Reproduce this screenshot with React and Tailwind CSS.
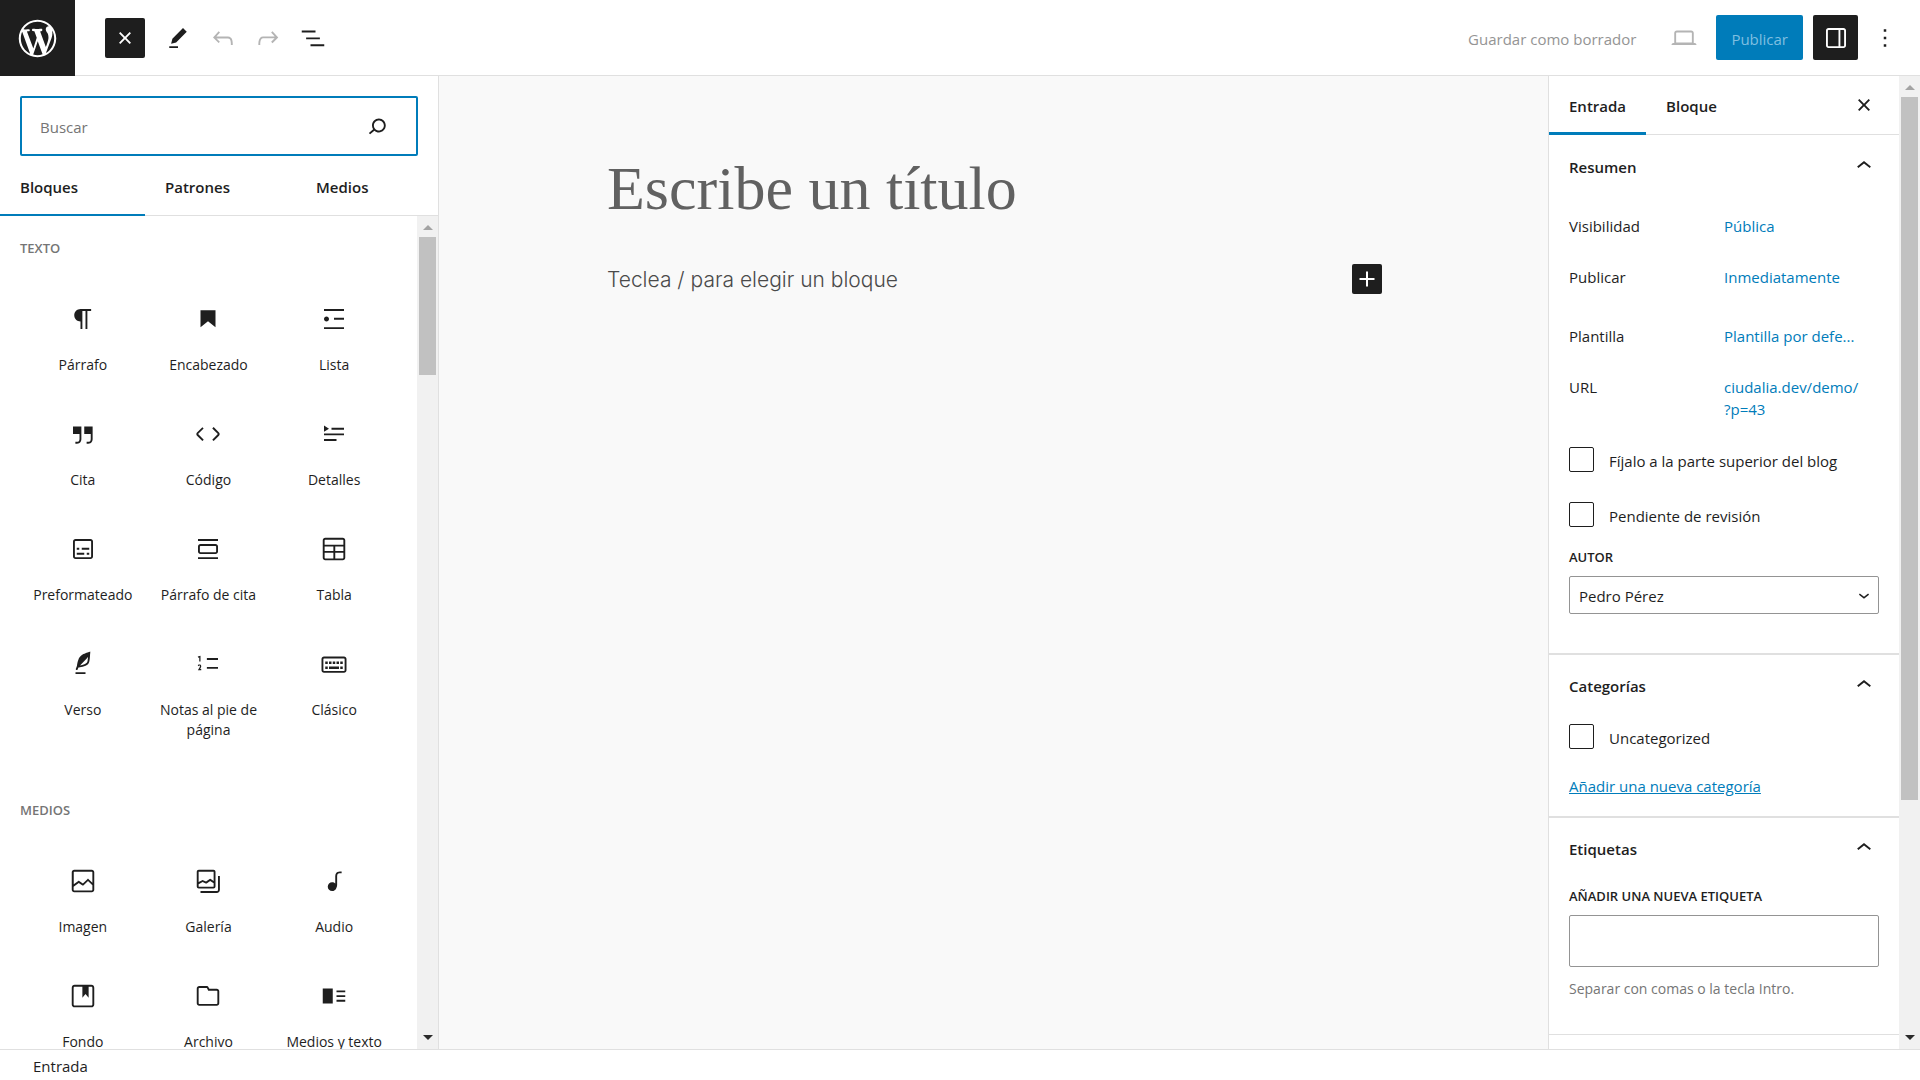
import React from 'react';

const ICONS = {
  paragraph: 'm9.99609 14v-.2251l.00391.0001v6.225h1.5v-14.5h2.5v14.5h1.5v-14.5h3v-1.5h-8.50391c-2.76142 0-5 2.23858-5 5 0 2.7614 2.23858 5 5 5z',
  heading: 'M6 5V18.5911L12 13.8473L18 18.5911V5H6Z',
  list: 'M4 4v1.5h16V4H4zm8 8.5h8V11h-8v1.5zM4 20h16v-1.5H4V20zm4-8c0-1.1-.9-2-2-2s-2 .9-2 2 .9 2 2 2 2-.9 2-2z',
  quote: 'M13 6v6h5.2v4c0 .8-.2 1.4-.5 1.7-.6.6-1.6.6-2.5.5h-.3v1.5h.5c1 0 2.3-.1 3.3-1 .6-.6 1-1.6 1-2.8V6H13zm-9 6h5.2v4c0 .8-.2 1.4-.5 1.7-.6.6-1.6.6-2.5.5h-.3v1.5h.5c1 0 2.3-.1 3.3-1 .6-.6 1-1.6 1-2.8V6H4v6z',
  code: 'M20.8 10.7l-4.3-4.3-1.1 1.1 4.3 4.3c.1.1.1.3 0 .4l-4.3 4.3 1.1 1.1 4.3-4.3c.7-.8.7-1.9 0-2.6zM4.2 11.8l4.3-4.3-1-1-4.3 4.3c-.7.7-.7 1.8 0 2.5l4.3 4.3 1.1-1.1-4.3-4.3c-.2-.1-.2-.3-.1-.4z',
  details: 'M4 16h10v1.5H4V16Zm0-4.5h16V13H4v-1.5ZM10 7h10v1.5H10V7Zm-6-1.75 4 2.5-4 2.5v-5Z',
  preformatted: 'M18 4H6c-1.1 0-2 .9-2 2v12c0 1.1.9 2 2 2h12c1.1 0 2-.9 2-2V6c0-1.1-.9-2-2-2zm.5 14c0 .3-.2.5-.5.5H6c-.3 0-.5-.2-.5-.5V6c0-.3.2-.5.5-.5h12c.3 0 .5.2.5.5v12zM7 16.5h6V15H7v1.5zm4-4h6V11h-6v1.5zM9 11H7v1.5h2V11zm6 5.5h2V15h-2v1.5z',
  pullquote: 'M18 8H6c-1.1 0-2 .9-2 2v4c0 1.1.9 2 2 2h12c1.1 0 2-.9 2-2v-4c0-1.1-.9-2-2-2zm.5 6c0 .3-.2.5-.5.5H6c-.3 0-.5-.2-.5-.5v-4c0-.3.2-.5.5-.5h12c.3 0 .5.2.5.5v4zM4 4v1.5h16V4H4zm0 16h16v-1.5H4V20z',
  table: 'M19 3H5c-1.1 0-2 .9-2 2v14c0 1.1.9 2 2 2h14c1.1 0 2-.9 2-2V5c0-1.1-.9-2-2-2zM5 4.5h14c.3 0 .5.2.5.5v3.5h-15V5c0-.3.2-.5.5-.5zm8 5.5h6.5v3.5H13V10zm-1.5 3.5h-7V10h7v3.5zm-7 5.5v-4h7v4.5H5c-.3 0-.5-.2-.5-.5zm14.5.5h-6V15h6.5v4c0 .3-.2.5-.5.5z',
  verse: 'M17.8 2l-.9.3c-.1 0-3.6 1-5.2 2.1C10 5.5 9.3 6.5 8.9 7.1c-.6.9-1.7 4.7-1.7 6.3l-.9 2.3c-.2.4 0 .8.4 1 .1 0 .2.1.3.1.3 0 .6-.2.7-.5l.6-1.5c.3 0 .7-.1 1.2-.2.7-.1 1.4-.3 2.2-.5.8-.2 1.6-.5 2.4-.8.7-.3 1.4-.7 1.9-1.2s.8-1.2 1-1.9c.2-.7.3-1.6.4-2.4.1-.8.1-1.7.2-2.5 0-.8.1-1.5.2-2.1V2zm-1.9 5.6c-.1.8-.2 1.5-.3 2.1-.2.6-.4 1-.6 1.3-.3.3-.8.6-1.4.9-.7.3-1.4.5-2.2.8-.6.2-1.3.3-1.8.4L15 7.5c.3-.3.6-.7 1-1.1 0 .4 0 .8-.1 1.2zM6 20h8v-1.5H6V20z',
  footnotes: 'M11.1 15.8H20v-1.5h-8.9v1.5zm0-8.6v1.5H20V7.2h-8.9zM5 6.7V10h1V5.3L3.8 6l.4 1 .8-.3zm-.4 5.7c-.3.1-.5.2-.7.3l.1 1.1c.2-.2.5-.4.8-.5.3-.1.6 0 .7.1.2.3 0 .8-.2 1.1-.5.8-.9 1.6-1.4 2.5h2.7v-1h-.9c.3-.6.8-1.4.9-2.1 0-.3-.1-.8-.3-1.1-.5-.6-1.3-.5-1.7-.4z',
  classic: 'M20 6H4c-1.1 0-2 .9-2 2v9c0 1.1.9 2 2 2h16c1.1 0 2-.9 2-2V8c0-1.1-.9-2-2-2zm.5 11c0 .3-.2.5-.5.5H4c-.3 0-.5-.2-.5-.5V8c0-.3.2-.5.5-.5h16c.3 0 .5.2.5.5v9zM10 10H8v2h2v-2zm-5 2h2v-2H5v2zm8-2h-2v2h2v-2zm-5 6h8v-2H8v2zm6-4h2v-2h-2v2zm3 0h2v-2h-2v2zm0 4h2v-2h-2v2zM5 16h2v-2H5v2z',
  image: 'M19 3H5c-1.1 0-2 .9-2 2v14c0 1.1.9 2 2 2h14c1.1 0 2-.9 2-2V5c0-1.1-.9-2-2-2zM5 4.5h14c.3 0 .5.2.5.5v8.4l-3-2.9c-.3-.3-.8-.3-1 0L11.9 14 9 12c-.3-.2-.6-.2-.8 0l-3.6 2.6V5c-.1-.3.1-.5.4-.5zm14 15H5c-.3 0-.5-.2-.5-.5v-2.4l4.1-3 3 1.9c.3.2.7.2.9-.1L16 12l3.5 3.4V19c0 .3-.2.5-.5.5z',
  gallery: 'M16.375 4.5H4.625a.125.125 0 0 0-.125.125v8.254l2.859-1.54a.75.75 0 0 1 .68-.016l2.384 1.142 2.89-2.074a.75.75 0 0 1 .874 0l2.313 1.66V4.625a.125.125 0 0 0-.125-.125Zm.125 9.398-2.75-1.975-2.813 2.02a.75.75 0 0 1-.76.067l-2.444-1.17L4.5 14.583v1.792c0 .069.056.125.125.125h11.75a.125.125 0 0 0 .125-.125v-2.477ZM4.625 3C3.728 3 3 3.728 3 4.625v11.75C3 17.273 3.728 18 4.625 18h11.75c.898 0 1.625-.727 1.625-1.625V4.625C18 3.728 17.273 3 16.375 3H4.625ZM20 8v11c0 .69-.31 1-.999 1H6v1.5h13.001c1.52 0 2.499-.982 2.499-2.5V8H20Z',
  audio: 'M17.7 4.3c-1.2 0-2.8 0-3.8 1-.6.6-.9 1.5-.9 2.6V14c-.6-.6-1.5-1-2.5-1C8.6 13 7 14.6 7 16.5S8.6 20 10.5 20c1.5 0 2.8-1 3.3-2.3.5-.8.7-1.8.7-2.5V7.9c0-.7.2-1.2.5-1.6.6-.6 1.8-.6 2.8-.6h.3V4.3h-.4z',
  cover: 'M18.7 3H5.3C4 3 3 4 3 5.3v13.4C3 20 4 21 5.3 21h13.4c1.3 0 2.3-1 2.3-2.3V5.3C21 4 20 3 18.7 3zm.8 15.7c0 .4-.4.8-.8.8H5.3c-.4 0-.8-.4-.8-.8V5.3c0-.4.4-.8.8-.8h6.2v8.9l2.5-3.1 2.5 3.1V4.5h2.2c.4 0 .8.4.8.8v13.4z',
  file: 'M19 6.2h-5.9l-.6-1.1c-.3-.7-1-1.1-1.8-1.1H5c-1.1 0-2 .9-2 2v11.8c0 1.1.9 2 2 2h14c1.1 0 2-.9 2-2V8.2c0-1.1-.9-2-2-2zm.5 11.6c0 .3-.2.5-.5.5H5c-.3 0-.5-.2-.5-.5V6c0-.3.2-.5.5-.5h5.8c.2 0 .4.1.4.3l1 1.9H19c.3 0 .5.2.5.5v9.6z',
  mediaText: 'M3 18h8V6H3v12zM14 7.5V9h7V7.5h-7zm0 5.3h7v-1.5h-7v1.5zm0 3.7h7V15h-7v1.5z',
  search: 'M13.5 6C10.5 6 8 8.5 8 11.5c0 1.1.3 2.1.9 3l-3.4 3 1 1.1 3.4-2.9c1 .9 2.2 1.4 3.6 1.4 3 0 5.5-2.5 5.5-5.5C19 8.5 16.5 6 13.5 6zm0 9.5c-2.2 0-4-1.8-4-4s1.8-4 4-4 4 1.8 4 4-1.8 4-4 4z',
  edit: 'm19 7-3-3-8.5 8.5-1 4 4-1L19 7Zm-7 11.5H5V20h7v-1.5Z',
  undo: 'M18.3 11.7c-.6-.6-1.4-.9-2.3-.9H6.7l2.9-3.3-1.1-1-4.5 5L8.5 16l1-1-2.7-2.7H16c.5 0 .9.2 1.3.5 1 1 1 3.4 1 4.5v.3h1.5v-.2c0-1.5 0-4.3-1.5-5.7z',
  redo: 'M15.6 6.5l-1.1 1 2.9 3.3H8c-.9 0-1.7.3-2.3.9-1.4 1.5-1.4 4.2-1.4 5.6v.2h1.5v-.3c0-1.1 0-3.5 1-4.5.3-.3.7-.5 1.3-.5h9.2L14.5 15l1.1 1.1 4.6-4.6-4.6-5z',
  listView: 'M3 6h11v1.5H3V6Zm3.5 5.5h11V13h-11v-1.5ZM21 17H10v1.5h11V17Z',
  desktop: 'M20.5 16h-.7V8c0-1.1-.9-2-2-2H6.2c-1.1 0-2 .9-2 2v8h-.7c-.8 0-1.5.7-1.5 1.5h20c0-.8-.7-1.5-1.5-1.5zM5.7 8c0-.3.2-.5.5-.5h11.6c.3 0 .5.2.5.5v7.6H5.7V8z',
  drawer: 'M18 4H6c-1.1 0-2 .9-2 2v12c0 1.1.9 2 2 2h12c1.1 0 2-.9 2-2V6c0-1.1-.9-2-2-2zm-4 14.5H6c-.3 0-.5-.2-.5-.5V6c0-.3.2-.5.5-.5h8v13zm4.5-.5c0 .3-.2.5-.5.5h-2.5v-13H18c.3 0 .5.2.5.5v12z',
  more: 'M13 19h-2v-2h2v2zm0-6h-2v-2h2v2zm0-6h-2V5h2v2z',
  close: 'M12 13.06l3.712 3.713 1.061-1.06L13.061 12l3.712-3.712-1.06-1.06L12 10.938 8.288 7.227l-1.061 1.06L10.939 12l-3.712 3.712 1.06 1.061L12 13.061z',
  chevronUp: 'M6.5 12.4L12 8l5.5 4.4-.9 1.2L12 10l-4.5 3.6-1-1.2z',
  chevronDown: 'M17.5 11.6L12 16l-5.5-4.4.9-1.2L12 14l4.5-3.6 1 1.2z',
  plus: 'M18 11.2h-5.2V6h-1.6v5.2H6v1.6h5.2V18h1.6v-5.2H18z',
};

const WP_LOGO =
  'M20 10c0-5.51-4.49-10-10-10C4.48 0 0 4.49 0 10c0 5.52 4.48 10 10 10 5.51 0 10-4.48 10-10zM7.78 15.37L4.37 6.22c.55-.02 1.17-.08 1.17-.08.5-.06.44-1.13-.06-1.11 0 0-1.45.11-2.37.11-.18 0-.37 0-.58-.01C4.12 2.69 6.87 1.11 10 1.11c2.33 0 4.45.87 6.05 2.34-.68-.11-1.65.39-1.65 1.58 0 .74.45 1.36.9 2.1.35.61.55 1.36.55 2.46 0 1.49-1.4 5-1.4 5l-3.03-8.37c.54-.02.82-.17.82-.17.5-.05.44-1.25-.06-1.22 0 0-1.44.12-2.38.12-.87 0-2.33-.12-2.33-.12-.5-.03-.56 1.2-.06 1.22l.92.08 1.26 3.41zM17.41 10c.24-.64.74-1.87.43-4.25.7 1.29 1.05 2.71 1.05 4.25 0 3.29-1.73 6.24-4.4 7.78.97-2.59 1.94-5.2 2.92-7.78zM6.1 18.09C3.12 16.65 1.11 13.53 1.11 10c0-1.3.23-2.48.72-3.59C3.25 10.3 4.67 14.2 6.1 18.09zm4.03-6.63l2.58 6.98c-.86.29-1.76.45-2.71.45-.79 0-1.57-.11-2.29-.33.81-2.38 1.62-4.74 2.42-7.1z';

function Icon({ name, className = 'size-[30px]' }) {
  return (
    <svg viewBox="0 0 24 24" className={`shrink-0 ${className}`} fill="currentColor" fillRule="evenodd" aria-hidden="true">
      <path d={ICONS[name]} />
    </svg>
  );
}

const BLOCKS = [
  {
    title: 'Texto',
    items: [
      ['paragraph', 'Párrafo'],
      ['heading', 'Encabezado'],
      ['list', 'Lista'],
      ['quote', 'Cita'],
      ['code', 'Código'],
      ['details', 'Detalles'],
      ['preformatted', 'Preformateado'],
      ['pullquote', 'Párrafo de cita'],
      ['table', 'Tabla'],
      ['verse', 'Verso'],
      ['footnotes', 'Notas al pie de página'],
      ['classic', 'Clásico'],
    ],
  },
  {
    title: 'Medios',
    items: [
      ['image', 'Imagen'],
      ['gallery', 'Galería'],
      ['audio', 'Audio'],
      ['cover', 'Fondo'],
      ['file', 'Archivo'],
      ['mediaText', 'Medios y texto'],
    ],
  },
];

function Scrollbar({ thumb }) {
  return (
    <div className="flex w-[21px] shrink-0 flex-col items-center bg-[#f1f1f1]" aria-hidden="true">
      <div className="flex h-[21px] shrink-0 items-center pt-[2px]">
        <svg viewBox="0 0 10 5" className="h-[5px] w-[10px] fill-[#a3a3a3]"><path d="M0 5 5 0l5 5z" /></svg>
      </div>
      <div className="flex min-h-0 w-full flex-1 flex-col items-center">
        <div className={`w-[17px] bg-[#c1c1c1] ${thumb}`} />
      </div>
      <div className="flex h-[21px] shrink-0 items-center pb-[2px]">
        <svg viewBox="0 0 10 5" className="h-[5px] w-[10px] fill-[#2b2b2b]"><path d="M0 0h10L5 5z" /></svg>
      </div>
    </div>
  );
}

function Header() {
  return (
    <header className="flex h-[76px] shrink-0 items-stretch bg-white">
      <a href="#inicio" aria-label="Ver entradas" className="flex w-[75px] items-center justify-center bg-[#1e1e1e] text-white">
        <svg viewBox="-2 -2 24 24" className="size-[45px]" fill="currentColor" aria-hidden="true"><path d={WP_LOGO} /></svg>
      </a>
      <div className="flex flex-1 items-center border-b border-[#e0e0e0] pr-[13px] pl-[30px]">
        <button aria-label="Cerrar el insertador" className="mr-[10px] flex size-10 items-center justify-center rounded-[2px] bg-[#1e1e1e] text-white">
          <Icon name="close" />
        </button>
        <button aria-label="Herramientas" className="flex size-[45px] items-center justify-center"><Icon name="edit" /></button>
        <button aria-label="Deshacer" disabled className="flex size-[45px] items-center justify-center text-[#b4b4b4]"><Icon name="undo" /></button>
        <button aria-label="Rehacer" disabled className="flex size-[45px] items-center justify-center text-[#b4b4b4]"><Icon name="redo" /></button>
        <button aria-label="Vista de lista" className="flex size-[45px] items-center justify-center"><Icon name="listView" /></button>
        <div className="ml-auto flex items-center">
          <button disabled className="mr-[25px] pt-[3px] text-[15px] text-[#949494]">Guardar como borrador</button>
          <button aria-label="Vista previa" disabled className="mr-[10px] flex size-[45px] items-center justify-center text-[#b4b4b4]"><Icon name="desktop" /></button>
          <button className="mr-[10px] h-[45px] rounded-[2px] bg-[#007cba] px-[15px] pt-[3px] text-[15px] text-[#7fbfe0]">Publicar</button>
          <button aria-label="Ajustes" className="mr-1 flex size-[45px] items-center justify-center rounded-[2px] bg-[#1e1e1e] text-white"><Icon name="drawer" /></button>
          <button aria-label="Opciones" className="flex size-[45px] items-center justify-center"><Icon name="more" /></button>
        </div>
      </div>
    </header>
  );
}

function Inserter() {
  return (
    <aside className="flex w-[439px] shrink-0 flex-col border-r border-[#e0e0e0] bg-white">
      <div className="px-5 pt-5">
        <label className="flex h-[60px] items-center rounded-[2px] border-2 border-[#007cba] pr-6 pl-[18px]">
          <input type="search" aria-label="Buscar" placeholder="Buscar" className="h-10 min-w-0 flex-1 bg-transparent pt-[2px] text-[15px] outline-none placeholder:text-[#757575]" />
          <Icon name="search" />
        </label>
      </div>
      <div role="tablist" className="grid h-[60px] shrink-0 grid-cols-[145fr_151fr_142fr] border-b border-[#e0e0e0] text-[15px] font-semibold">
        <button role="tab" aria-selected="true" className="-mb-px border-b-2 border-[#007cba] pt-1 pl-5 text-left">Bloques</button>
        <button role="tab" aria-selected="false" className="pt-[3px] pl-5 text-left">Patrones</button>
        <button role="tab" aria-selected="false" className="pt-[3px] pl-5 text-left">Medios</button>
      </div>
      <div className="flex min-h-0 flex-1">
        <div className="flex-1 overflow-hidden">
          {BLOCKS.map((section) => (
            <section key={section.title} className="px-5 pt-[22px] pb-[37px]">
              <h2 className="mb-[23px] text-[13px] leading-5 font-semibold text-[#757575] uppercase">{section.title}</h2>
              <div className="grid grid-cols-3">
                {section.items.map(([icon, label]) => (
                  <button key={label} className="flex h-[115px] flex-col items-center gap-[21px] px-1 pt-[23px] text-[14px] leading-5">
                    <Icon name={icon} />
                    <span>{label}</span>
                  </button>
                ))}
              </div>
            </section>
          ))}
        </div>
        <Scrollbar thumb="h-[17.5%]" />
      </div>
    </aside>
  );
}

function Canvas() {
  return (
    <main className="min-w-0 flex-1 bg-[#f9f9f9] pr-5 pl-[22px]">
      <div className="mx-auto max-w-[775px] pt-[74px]">
        <h1 className="font-['Liberation_Serif',serif] text-[62px] leading-[76px] text-[#616161]">Escribe un título</h1>
        <div className="mt-[38px] flex items-center justify-between">
          <p className="pt-[2px] font-['Inter',sans-serif] text-[21px] leading-7 font-light text-[#4a4a4a]">Teclea / para elegir un bloque</p>
          <button aria-label="Añadir bloque" className="flex size-[30px] items-center justify-center rounded-[2px] bg-[#1e1e1e] text-white"><Icon name="plus" /></button>
        </div>
      </div>
    </main>
  );
}

function PanelTitle({ children }) {
  return (
    <h2>
      <button aria-expanded="true" className="flex h-[60px] w-full items-center justify-between text-left text-[15px] font-semibold">
        <span className="pt-[3px]">{children}</span>
        <Icon name="chevronUp" />
      </button>
    </h2>
  );
}

function Row({ label, children }) {
  return (
    <div className="flex items-start py-[10px] leading-[22px]">
      <span className="w-[155px] shrink-0">{label}</span>
      <a href="#editar" className="max-w-[140px] text-[#007cba]">{children}</a>
    </div>
  );
}

function Check({ children }) {
  return (
    <label className="flex items-center gap-[15px]">
      <input type="checkbox" className="size-[25px] shrink-0 appearance-none rounded-[2px] border border-[#1e1e1e] bg-white" />
      <span className="pt-[2px] leading-5">{children}</span>
    </label>
  );
}

function Settings() {
  return (
    <aside className="flex w-[372px] shrink-0 border-l border-[#e0e0e0] bg-white">
      <div className="flex min-w-0 flex-1 flex-col overflow-hidden text-[15px]">
        <div role="tablist" className="flex h-[59px] shrink-0 items-stretch border-b border-[#e0e0e0] font-semibold">
          <button role="tab" aria-selected="true" className="-mb-px border-b-3 border-[#007cba] px-5 pt-[5px]">Entrada</button>
          <button role="tab" aria-selected="false" className="px-5 pt-[5px] pb-[2px]">Bloque</button>
          <button aria-label="Cerrar ajustes" className="mr-5 ml-auto"><Icon name="close" /></button>
        </div>

        <section className="shrink-0 border-b-2 border-[#e0e0e0] px-5 pt-px pb-[39px]">
          <PanelTitle>Resumen</PanelTitle>
          <div className="pt-[9px]">
            <Row label="Visibilidad">Pública</Row>
            <div className="pt-[9px] pb-[17px]"><Row label="Publicar">Inmediatamente</Row></div>
            <Row label="Plantilla">Plantilla por defe...</Row>
            <div className="pt-[9px]"><Row label="URL">ciudalia.dev/demo/<wbr />?p=43</Row></div>
          </div>
          <div className="flex flex-col gap-[30px] pt-[17px]">
            <Check>Fíjalo a la parte superior del blog</Check>
            <Check>Pendiente de revisión</Check>
          </div>
          <label htmlFor="autor" className="mt-5 mb-[9px] block text-[13px] leading-5 font-semibold uppercase">Autor</label>
          <div className="relative">
            <select id="autor" className="h-[38px] w-full appearance-none rounded-[2px] border border-[#949494] bg-white px-[9px] pt-[2px] text-[15px]">
              <option>Pedro Pérez</option>
            </select>
            <Icon name="chevronDown" className="pointer-events-none absolute top-2 right-1 size-[22px]" />
          </div>
        </section>

        <section className="shrink-0 border-b-2 border-[#e0e0e0] px-5 pb-[18px]">
          <PanelTitle>Categorías</PanelTitle>
          <div className="pt-[9px]"><Check>Uncategorized</Check></div>
          <a href="#categoria" className="mt-[26px] inline-block leading-[22px] text-[#007cba] underline">Añadir una nueva categoría</a>
        </section>

        <section className="shrink-0 border-b border-[#e0e0e0] px-5 pb-[35px]">
          <PanelTitle>Etiquetas</PanelTitle>
          <label htmlFor="etiqueta" className="mt-2 mb-[9px] block text-[13px] leading-5 font-semibold uppercase">Añadir una nueva etiqueta</label>
          <input id="etiqueta" type="text" className="block h-[52px] w-full rounded-[2px] border border-[#949494] px-2" />
          <p className="mt-3 text-[14px] leading-5 text-[#757575]">Separar con comas o la tecla Intro.</p>
        </section>
      </div>
      <Scrollbar thumb="h-[75.5%]" />
    </aside>
  );
}

export default function App() {
  return (
    <div className="flex h-screen flex-col overflow-hidden bg-white font-['Open_Sans','Noto_Sans',sans-serif] text-[#1e1e1e]">
      <Header />
      <div className="flex min-h-0 flex-1">
        <Inserter />
        <Canvas />
        <Settings />
      </div>
      <footer className="flex h-[31px] shrink-0 items-center border-t border-[#e0e0e0] pt-[2px] pl-[33px] text-[15px]">Entrada</footer>
    </div>
  );
}
